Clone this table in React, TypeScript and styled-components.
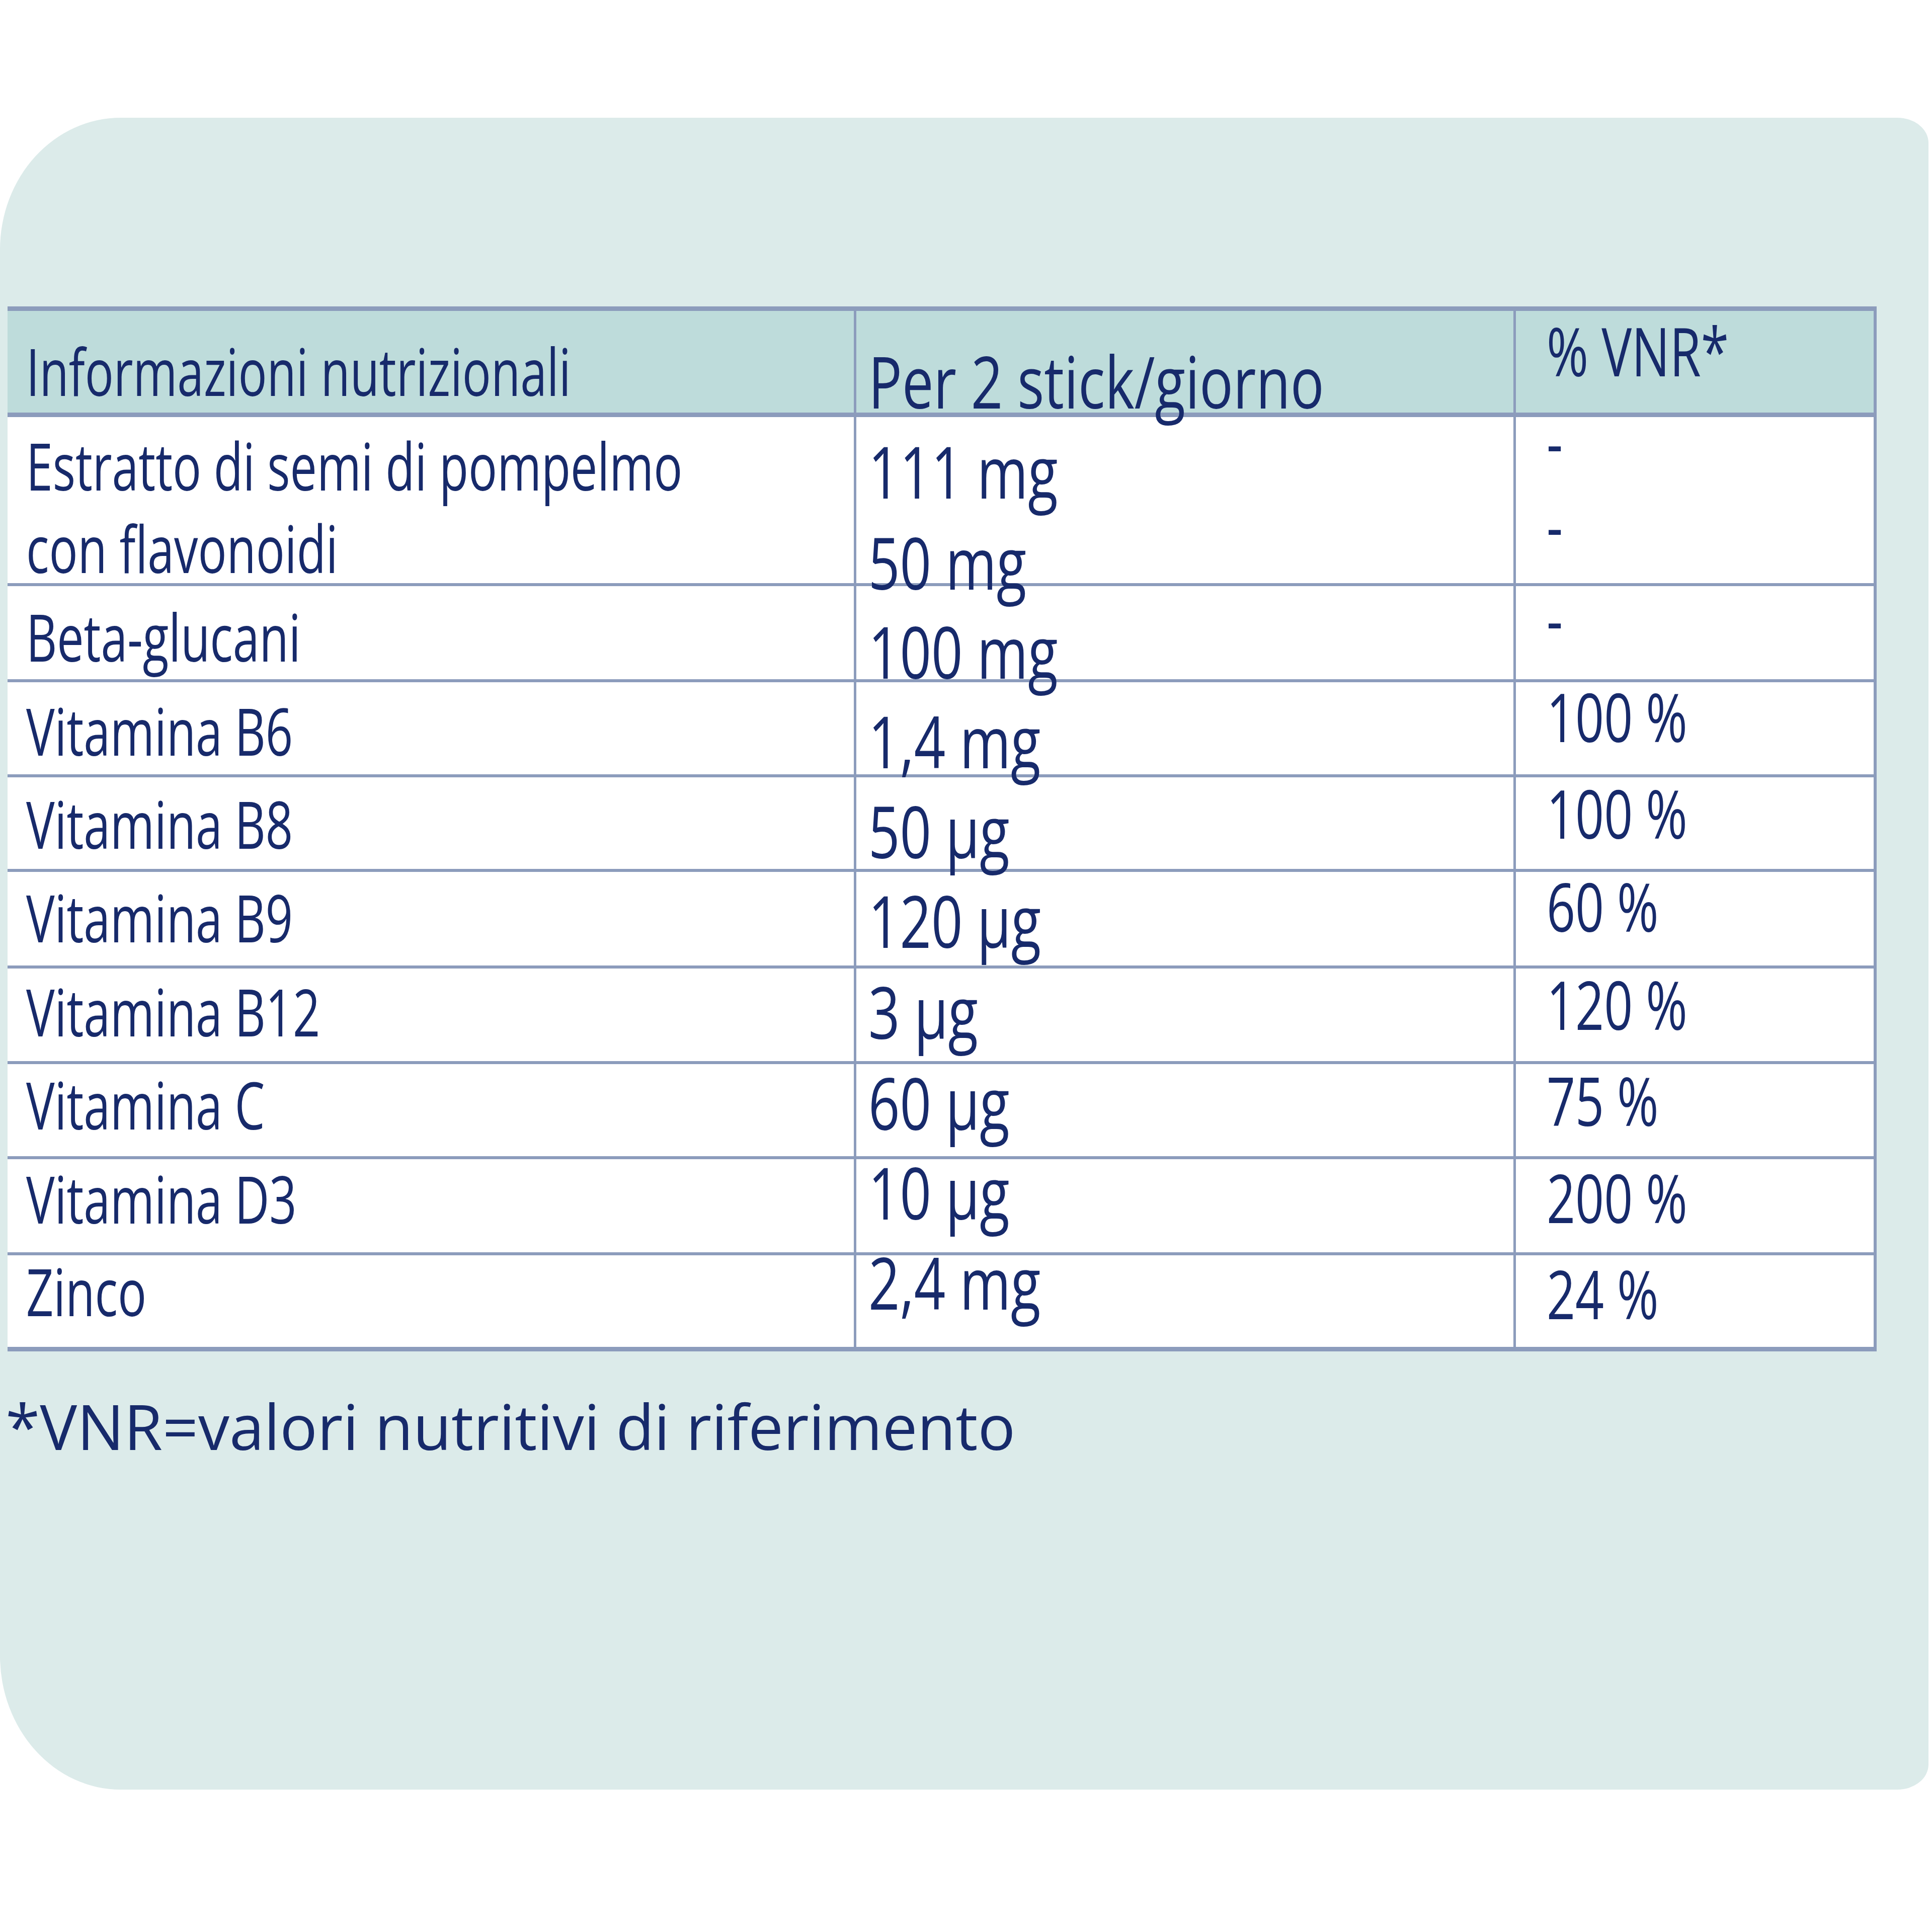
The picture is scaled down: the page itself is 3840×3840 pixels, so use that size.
import styled, { createGlobalStyle } from "styled-components";

type ColKey = "label" | "value" | "vnr";

type CellData = { lines: string[]; base: number; squeeze?: number };

type RowData = {
    height: number;
    label: CellData;
    value: CellData;
    vnr: CellData;
};

// per column: font size, horizontal squeeze, gap between lines of one cell
const colFont: Record<ColKey, number> = { label: 130, value: 143, vnr: 134 };
const colSqueeze: Record<ColKey, number> = { label: 0.73, value: 0.765, vnr: 0.745 };
const colGap: Record<ColKey, number> = { label: 164, value: 181, vnr: 166 };
const colPad: Record<ColKey, number> = { label: 37, value: 24, vnr: 61 };

const headerRow: RowData = {
    height: 211,
    label: { lines: ["Informazioni nutrizionali"], base: 169 },
    value: { lines: ["Per 2 stick/giorno"], base: 194, squeeze: 0.778 },
    vnr: { lines: ["% VNR*"], base: 130, squeeze: 0.75 },
};

const bodyRows: RowData[] = [
    {
        height: 336,
        label: { lines: ["Estratto di semi di pompelmo", "con flavonoidi"], base: 146 },
        value: { lines: ["111 mg", "50 mg"], base: 162 },
        vnr: { lines: ["-", "-"], base: 99 },
    },
    { height: 191, label: { lines: ["Beta-glucani"], base: 150 }, value: { lines: ["100 mg"], base: 184 }, vnr: { lines: ["-"], base: 115 } },
    { height: 189, label: { lines: ["Vitamina B6"], base: 146 }, value: { lines: ["1,4 mg"], base: 171 }, vnr: { lines: ["100 %"], base: 119 } },
    { height: 188, label: { lines: ["Vitamina B8"], base: 142 }, value: { lines: ["50 µg"], base: 161 }, vnr: { lines: ["100 %"], base: 122 } },
    { height: 192, label: { lines: ["Vitamina B9"], base: 140 }, value: { lines: ["120 µg"], base: 151 }, vnr: { lines: ["60 %"], base: 119 } },
    { height: 190, label: { lines: ["Vitamina B12"], base: 135 }, value: { lines: ["3 µg"], base: 140 }, vnr: { lines: ["120 %"], base: 122 } },
    { height: 189, label: { lines: ["Vitamina C"], base: 130 }, value: { lines: ["60 µg"], base: 131 }, vnr: { lines: ["75 %"], base: 123 } },
    { height: 191, label: { lines: ["Vitamina D3"], base: 128 }, value: { lines: ["10 µg"], base: 120 }, vnr: { lines: ["200 %"], base: 127 } },
    { height: 191, label: { lines: ["Zinco"], base: 121 }, value: { lines: ["2,4 mg"], base: 108 }, vnr: { lines: ["24 %"], base: 127 } },
];

const columns: ColKey[] = ["label", "value", "vnr"];

const NutritionCell = ({ col, data, line }: { col: ColKey; data: CellData; line: number }) => (
    <Cell $col={col} $line={line}>
        <Stack $offset={data.base - colFont[col] * 0.888}>
            {data.lines.map((text, i) => (
                <Line key={i} $col={col} $first={i === 0} $squeeze={data.squeeze ?? colSqueeze[col]}>
                    {text}
                </Line>
            ))}
        </Stack>
    </Cell>
);

const App = () => {
    return (
        <>
            <GlobalStyle />
            <Page>
                <Card>
                    <Table>
                        <Row $h={headerRow.height} $head>
                            {columns.map((col) => (
                                <NutritionCell key={col} col={col} data={headerRow[col]} line={9} />
                            ))}
                        </Row>
                        {bodyRows.map((row, index) => (
                            <Row key={index} $h={row.height}>
                                {columns.map((col) => (
                                    <NutritionCell
                                        key={col}
                                        col={col}
                                        data={row[col]}
                                        line={index === bodyRows.length - 1 ? 9 : 6}
                                    />
                                ))}
                            </Row>
                        ))}
                    </Table>
                    <Note>*VNR=valori nutritivi di riferimento</Note>
                </Card>
            </Page>
        </>
    );
};

const GlobalStyle = createGlobalStyle`
    html, body {
        margin: 0;
        padding: 0;
        background: #ffffff;
    }
    body {
        font-family: "Open Sans", "Noto Sans", sans-serif;
        color: #172a6b;
    }
`;

const Page = styled.div`
    width: 3840px;
    height: 3840px;
    padding-top: 234px;
    box-sizing: border-box;
    background: #ffffff;
    overflow: hidden;
`;

const Card = styled.section`
    width: 3833px;
    height: 3323px;
    box-sizing: border-box;
    padding-top: 375px;
    background: #dcebea;
    border-radius: 240px 62px 62px 240px / 262px 50px 50px 266px;
`;

const Table = styled.div`
    width: 3715px;
    margin-left: 15px;
    border-top: 9px solid #8c9cbc;
`;

const Row = styled.div<{ $h: number; $head?: boolean }>`
    display: grid;
    grid-template-columns: 1687px 1311px 717px;
    grid-template-rows: ${(p) => p.$h}px;
    height: ${(p) => p.$h}px;
    background: ${(p) => (p.$head ? "#bedcdb" : "#ffffff")};
`;

const Cell = styled.div<{ $col: ColKey; $line: number }>`
    box-sizing: border-box;
    min-height: 0;
    padding-left: ${(p) => colPad[p.$col]}px;
    border-bottom: ${(p) => p.$line}px solid #8c9cbc;
    border-right: ${(p) => (p.$col === "vnr" ? 6 : 5)}px solid #8c9cbc;
    overflow: visible;
`;

const Stack = styled.div<{ $offset: number }>`
    margin-top: ${(p) => p.$offset}px;
`;

const Line = styled.div<{ $col: ColKey; $first: boolean; $squeeze: number }>`
    font-size: ${(p) => colFont[p.$col]}px;
    line-height: ${(p) => colFont[p.$col]}px;
    margin-top: ${(p) => (p.$first ? 0 : colGap[p.$col] - colFont[p.$col])}px;
    white-space: nowrap;
    transform: scaleX(${(p) => p.$squeeze});
    transform-origin: left center;
`;

const Note = styled.p`
    margin: 86px 0 0 11px;
    font-size: 124px;
    line-height: 124px;
    white-space: nowrap;
`;

export default App;
